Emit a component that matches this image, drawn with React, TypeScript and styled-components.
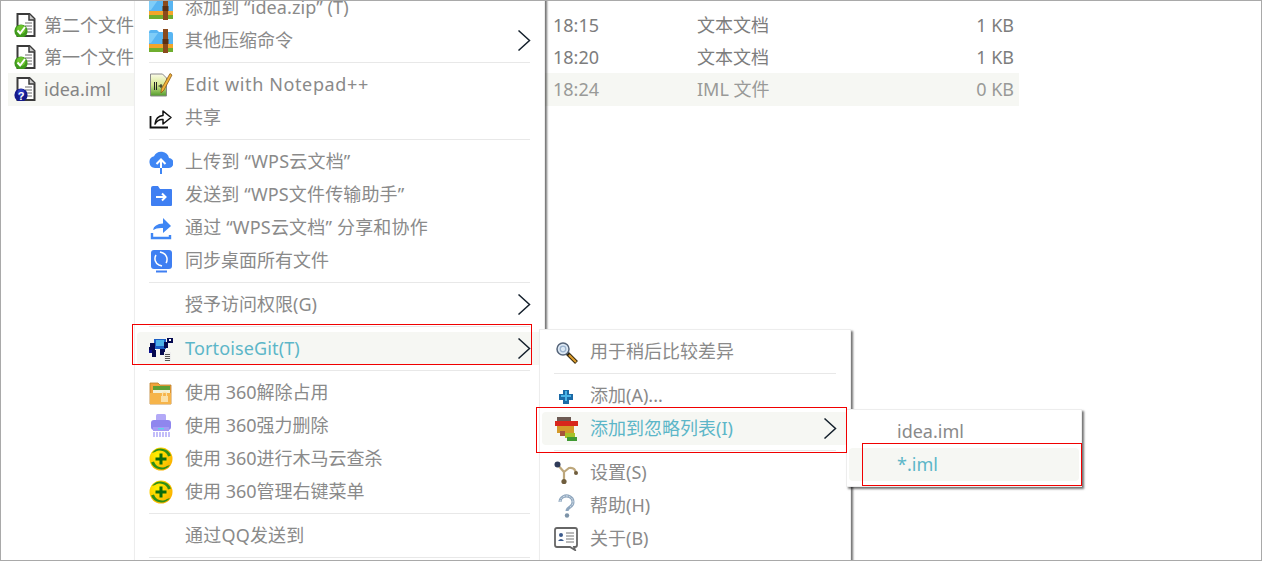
import React from "react";
import styled, { createGlobalStyle } from "styled-components";

const Global = createGlobalStyle`
  html, body { margin: 0; padding: 0; background: #fff; }
  body { font-family: "Noto Sans", "Noto Sans CJK SC", sans-serif; }
`;

const Stage = styled.div`
  position: relative;
  box-sizing: border-box;
  width: 1262px;
  height: 561px;
  border: 1px solid #a9a9a9;
  overflow: hidden;
  background: #fff;
  padding: 8px 0 0 7px;
  font-size: 18px;
`;

const FileList = styled.div`
  width: 1011px;
  display: flex;
  flex-direction: column;
`;

const FileRow = styled.div<{ $selected?: boolean }>`
  display: grid;
  grid-template-columns: 539px 144px 1fr auto;
  align-items: center;
  box-sizing: border-box;
  height: ${(p) => (p.$selected ? 33 : 32)}px;
  padding: 0 5px ${(p) => (p.$selected ? 1 : 0)}px 6px;
  background: ${(p) => (p.$selected ? "#f6f7f3" : "transparent")};
  color: ${(p) => (p.$selected ? "#999a98" : "#7d7d7d")};
  line-height: 32px;
`;

const FileName = styled.div`
  display: flex;
  align-items: center;
  gap: 6px;
  color: #858585;
`;

const Menu = styled.div<{ $left: number; $top: number; $width: number }>`
  position: absolute;
  left: ${(p) => p.$left}px;
  top: ${(p) => p.$top}px;
  width: ${(p) => p.$width}px;
  box-sizing: border-box;
  padding: 5px 2px;
  background: #fff;
  border: 1px solid #ededed;
  box-shadow: 2px 2px 2px rgba(0, 0, 0, 0.55);
  color: #8a8a8a;
`;

const Row = styled.div<{ $active?: boolean }>`
  position: relative;
  display: flex;
  align-items: center;
  height: 33px;
  padding-left: 12px;
  border-radius: 4px;
  background: ${(p) => (p.$active ? "#f6f7f3" : "transparent")};
  color: ${(p) => (p.$active ? "#5cb6c8" : "inherit")};
  white-space: nowrap;
`;

const IconSlot = styled.span`
  flex: 0 0 24px;
  width: 24px;
  height: 24px;
  margin-right: 12px;
  display: flex;
`;

const Label = styled.span<{ $tracking?: number; $latin?: boolean }>`
  padding-bottom: ${(p) => (p.$latin ? 1 : 3)}px;
  letter-spacing: ${(p) => p.$tracking ?? 0}px;
`;

const Chevron = styled.svg`
  position: absolute;
  right: 11px;
  top: 5px;
`;

const Separator = styled.div`
  height: 1px;
  margin: 5px 12px;
  background: #e8e8e8;
`;

const RedFrame = styled.div<{ $x: number; $y: number; $w: number; $h: number }>`
  position: absolute;
  left: ${(p) => p.$x}px;
  top: ${(p) => p.$y}px;
  width: ${(p) => p.$w}px;
  height: ${(p) => p.$h}px;
  box-sizing: border-box;
  border: 1px solid #f00000;
  pointer-events: none;
`;

const Svg = styled.svg`
  display: block;
  width: 24px;
  height: 24px;
`;

const FileBadge = ({ kind }: { kind: "ok" | "unknown" }) => (
  <Svg viewBox="0 0 24 24">
    <path d="M3.5 1h12l5 5v17h-17z" fill="#fff" stroke="#3b3b3b" strokeWidth="2" />
    <path d="M15 1v6h6" fill="#c9c9c9" stroke="#3b3b3b" strokeWidth="1.5" />
    <path d="M11 10h7M11 13h7M11 16h7M11 19h7" stroke="#6a6a6a" strokeWidth="1" />
    {kind === "ok" ? (
      <>
        <circle cx="7" cy="18" r="6.6" fill="#3f9a1c" />
        <circle cx="7" cy="16.5" r="4.5" fill="#6cc22f" />
        <path d="M3.5 17.5l2.6 3L11 14" fill="none" stroke="#fff" strokeWidth="2" />
      </>
    ) : (
      <>
        <circle cx="7" cy="18" r="6.6" fill="#141a8c" />
        <circle cx="7" cy="15.5" r="3.5" fill="#2b3ac0" />
        <text x="7" y="22.5" textAnchor="middle" fontSize="11" fontWeight="700" fill="#fff" fontFamily="Liberation Sans, sans-serif">?</text>
      </>
    )}
  </Svg>
);

const ZipIcon = () => (
  <Svg viewBox="0 0 24 24">
    <path d="M0 3q0-2 2-2h6l2 2h12q2 0 2 2v11H0z" fill="#58b5f2" />
    <path d="M0 4l9 0-7 10H0z" fill="#7fcdf8" />
    <rect x="0" y="15" width="24" height="4" fill="#f3a52a" />
    <rect x="0" y="19" width="24" height="4" fill="#6fae2f" />
    <rect x="14" y="0" width="5" height="24" fill="#8a4a1c" />
    <rect x="13.5" y="10" width="6" height="5" fill="#5d2f10" />
  </Svg>
);

const NotepadIcon = () => (
  <Svg viewBox="0 0 24 24">
    <defs>
      <linearGradient id="np" x1="0" y1="0" x2="0" y2="1">
        <stop offset="0" stopColor="#fbfbe8" />
        <stop offset="0.5" stopColor="#d6e88e" />
        <stop offset="1" stopColor="#4f9a2b" />
      </linearGradient>
    </defs>
    <path d="M1.500 1h12l4 4v18h-16z" fill="url(#np)" stroke="#8a8a8a" />
    <path d="M5.500 9v8M7.500 9v8M9.500 13h4M12 11v4" stroke="#222" strokeWidth="1" />
    <path d="M21 .5l2 1.500-8 15-3 3 .3-4z" fill="#f2b33c" stroke="#8c5a17" strokeWidth=".8" />
  </Svg>
);

const ShareIcon = () => (
  <Svg viewBox="0 0 24 24">
    <path d="M1.500 10v11.500h17.500" fill="none" stroke="#111" strokeWidth="1.800" />
    <path d="M6 18q1-8 8-8.500V5l8 6.500-8 6.500v-4.500q-5-.5-8 4.500z" fill="#fff" stroke="#111" strokeWidth="1.500" strokeLinejoin="round" />
  </Svg>
);

const CloudIcon = () => (
  <Svg viewBox="0 0 24 24">
    <path d="M6 18a6 6 0 0 1-1-11.800A8 8 0 0 1 20 8a5 5 0 0 1-1 10z" fill="#3f86f4" />
    <path d="M12 23.500V10M7.500 14l4.500-4.500 4.500 4.500" fill="none" stroke="#fff" strokeWidth="2" />
    <path d="M12 18v6" stroke="#3f86f4" strokeWidth="2" />
  </Svg>
);

const SendIcon = () => (
  <Svg viewBox="0 0 24 24">
    <path d="M2 5q0-2 2-2h5l2 3h11q1 0 1 1v15q0 1-1 1H3q-1 0-1-1z" fill="#3f7ff2" />
    <path d="M7 14h9M13 10.500l3.500 3.500-3.500 3.500" fill="none" stroke="#fff" strokeWidth="2" />
  </Svg>
);

const ShareBlueIcon = () => (
  <Svg viewBox="0 0 24 24">
    <path d="M4 14q1-6 10-6.500V2l8 8-8 7v-5q-6-.5-10 2z" fill="#3f86f4" />
    <path d="M3 17v5h18v-3" fill="none" stroke="#3f86f4" strokeWidth="2.400" />
  </Svg>
);

const SyncIcon = () => (
  <Svg viewBox="0 0 24 24">
    <rect x="2" y="1" width="21" height="19" rx="3" fill="#3f7ff2" />
    <path d="M7 6a7 7 0 0 0 3 10M17 14a7 7 0 0 0-3-10M10 16l3 1M14 4l-3-1" fill="none" stroke="#fff" strokeWidth="1.500" />
    <path d="M7 22.500h11" stroke="#3f7ff2" strokeWidth="2" />
  </Svg>
);

const TortoiseIcon = () => (
  <Svg viewBox="0 0 24 24" shapeRendering="crispEdges">
    <rect x="5" y="2" width="12" height="10" fill="#1c5fc4" />
    <rect x="7" y="3" width="8" height="6" fill="#4db2e8" />
    <rect x="1" y="6" width="5" height="7" fill="#050a50" />
    <rect x="15" y="5" width="4" height="6" fill="#050a50" />
    <rect x="0" y="10" width="4" height="3" fill="#050a50" />
    <rect x="18" y="1" width="6" height="5" fill="#050a50" />
    <rect x="20" y="2" width="2" height="2" fill="#fff" />
    <rect x="0" y="13" width="7" height="3" fill="#0a1090" />
    <rect x="3" y="13" width="4" height="7" fill="#050a50" />
    <rect x="11" y="12" width="5" height="6" fill="#050a50" />
    <rect x="15" y="15" width="7" height="9" fill="#eee" />
    <path d="M16 17h5M16 19h5M16 21h5M16 23h5" stroke="#555" />
  </Svg>
);

const Folder360Icon = () => (
  <Svg viewBox="0 0 24 24">
    <path d="M1 2h8l2 2h11v19H1z" fill="#f1a33b" stroke="#b97c26" strokeWidth=".8" />
    <rect x="4" y="5" width="17" height="4" fill="#5f9f35" />
    <rect x="4" y="9" width="17" height="3" fill="#f3f0d8" />
    <path d="M1 12h21v11H1z" fill="#f6b44a" />
    <rect x="12" y="15" width="7" height="6" fill="#fbe0a8" />
    <path d="M13.500 15v-2a2 2 0 0 1 4 0v2" fill="none" stroke="#fbe0a8" strokeWidth="1.200" />
  </Svg>
);

const ShredIcon = () => (
  <Svg viewBox="0 0 24 24">
    <rect x="7" y="0" width="10" height="8" rx="1.500" fill="#b3a9f7" />
    <rect x="2" y="6" width="20" height="10" rx="3" fill="#8f86ee" />
    <rect x="4" y="13" width="16" height="4" fill="#a59cf4" />
    <rect x="9" y="14" width="6" height="1.500" fill="#5ed2ea" />
    <path d="M5 18v5M8 18v5M11 18v5M14 18v5M17 18v5M20 18v5" stroke="#b9b2f8" strokeWidth="1.700" />
  </Svg>
);

const Plus360Icon = () => (
  <Svg viewBox="0 0 24 24">
    <defs>
      <radialGradient id="yl" cx="0.35" cy="0.35" r="0.8">
        <stop offset="0" stopColor="#fff200" />
        <stop offset="1" stopColor="#fba900" />
      </radialGradient>
    </defs>
    <circle cx="12" cy="12" r="11.500" fill="url(#yl)" />
    <path d="M3 6A11 11 0 0 1 22 8.500L19 9.500A8.500 8.500 0 0 0 6 5z" fill="#2f8f16" />
    <path d="M21 18A11 11 0 0 1 2 15.500L5 14.500A8.500 8.500 0 0 0 18 19z" fill="#2f8f16" />
    <path d="M12 6.500v11M6.500 12h11" stroke="#0d6b0a" strokeWidth="3" />
  </Svg>
);

const MagnifierIcon = () => (
  <Svg viewBox="0 0 24 24">
    <path d="M13 13l9.500 9.500" stroke="#3a2c10" strokeWidth="4" />
    <path d="M15 15l7 7" stroke="#e0a030" strokeWidth="2" />
    <circle cx="9" cy="9" r="6" fill="#dde9f5" stroke="#56657a" strokeWidth="1.500" />
    <circle cx="9" cy="9" r="2.800" fill="none" stroke="#9cb4cf" strokeWidth="1.300" />
  </Svg>
);

const PlusIcon = () => (
  <Svg viewBox="0 0 24 24" shapeRendering="crispEdges">
    <path d="M9 6h6v4h4v6h-4v4H9v-4H5v-6h4z" fill="#1b6aa6" />
    <path d="M11 7h2v4h4v2h-4v4h-2v-4H7v-2h4z" fill="#49b4e8" />
  </Svg>
);

const IgnoreIcon = () => (
  <Svg viewBox="0 0 24 24">
    <defs>
      <filter id="soft" x="-10%" y="-10%" width="120%" height="120%">
        <feGaussianBlur stdDeviation="0.7" />
      </filter>
    </defs>
    <g filter="url(#soft)">
      <rect x="3" y="0" width="14" height="4" fill="#6d5a52" />
      <rect x="1" y="4" width="23" height="5" fill="#d8261c" />
      <rect x="3" y="9" width="17" height="7" fill="#d49a2a" />
      <rect x="6" y="14" width="5" height="5" fill="#a8553a" />
      <rect x="11" y="16" width="10" height="5" fill="#a6c32a" />
      <rect x="13" y="20" width="10" height="4" fill="#3f9a30" />
    </g>
  </Svg>
);

const SettingsIcon = () => (
  <Svg viewBox="0 0 24 24">
    <path d="M3 3l7 8v9M10 11l5-4q6-1 7 5" fill="none" stroke="#bda77c" strokeWidth="2.200" />
    <circle cx="3.500" cy="3.500" r="3" fill="#2e3a58" />
    <circle cx="10" cy="20.500" r="2.600" fill="#6f5d3d" />
    <circle cx="22" cy="12" r="2" fill="#6f5d3d" />
  </Svg>
);

const HelpIcon = () => (
  <Svg viewBox="0 0 24 24">
    <path d="M6 8a6.500 6 0 1 1 10 5q-3 2-3 4" fill="none" stroke="#8ea6be" strokeWidth="3" />
    <path d="M6 8a6.500 6 0 1 1 10 5" fill="none" stroke="#e4ebf2" strokeWidth="1" strokeDasharray="2 1" />
    <circle cx="13" cy="21.500" r="2.200" fill="#7d93a8" />
  </Svg>
);

const AboutIcon = () => (
  <Svg viewBox="0 0 24 24">
    <path d="M3 1h18q2 0 2 2v15q0 2-2 2h-1l1 3-5-3H3q-2 0-2-2V3q0-2 2-2z" fill="#fff" stroke="#666" strokeWidth="1.800" />
    <circle cx="7" cy="8" r="2" fill="#3c5a8c" />
    <path d="M4 14q3-4 6 0z" fill="#3c5a8c" />
    <path d="M12 6h8M12 9h8M12 12h8M12 15h8" stroke="#777" strokeWidth="1" />
  </Svg>
);

type Entry =
  | { sep: true }
  | { label: string; icon?: React.ReactNode; more?: boolean; active?: boolean; tracking?: number; latin?: boolean };

const mainMenu: Entry[] = [
  { label: "添加到 “idea.zip” (T)", icon: <ZipIcon />, tracking: 0.1 },
  { label: "其他压缩命令", icon: <ZipIcon />, more: true },
  { sep: true },
  { label: "Edit with Notepad++", icon: <NotepadIcon />, tracking: 0.62, latin: true },
  { label: "共享", icon: <ShareIcon /> },
  { sep: true },
  { label: "上传到 “WPS云文档”", icon: <CloudIcon />, tracking: 0.2 },
  { label: "发送到 “WPS文件传输助手”", icon: <SendIcon />, tracking: 0.15 },
  { label: "通过 “WPS云文档” 分享和协作", icon: <ShareBlueIcon />, tracking: 0.18 },
  { label: "同步桌面所有文件", icon: <SyncIcon /> },
  { sep: true },
  { label: "授予访问权限(G)", more: true },
  { sep: true },
  { label: "TortoiseGit(T)", icon: <TortoiseIcon />, more: true, active: true, tracking: 0.14, latin: true },
  { sep: true },
  { label: "使用 360解除占用", icon: <Folder360Icon /> },
  { label: "使用 360强力删除", icon: <ShredIcon /> },
  { label: "使用 360进行木马云查杀", icon: <Plus360Icon /> },
  { label: "使用 360管理右键菜单", icon: <Plus360Icon /> },
  { sep: true },
  { label: "通过QQ发送到", tracking: 0.2 },
  { sep: true },
];

const gitMenu: Entry[] = [
  { label: "用于稍后比较差异", icon: <MagnifierIcon /> },
  { sep: true },
  { label: "添加(A)...", icon: <PlusIcon /> },
  { label: "添加到忽略列表(I)", icon: <IgnoreIcon />, more: true, active: true },
  { sep: true },
  { label: "设置(S)", icon: <SettingsIcon /> },
  { label: "帮助(H)", icon: <HelpIcon /> },
  { label: "关于(B)", icon: <AboutIcon /> },
];

const ignoreMenu: Entry[] = [
  { label: "idea.iml", latin: true },
  { label: "*.iml", active: true, latin: true },
];

const Entries = ({ items }: { items: Entry[] }) => (
  <>
    {items.map((e, i) =>
      "sep" in e ? (
        <Separator key={i} />
      ) : (
        <Row key={i} $active={e.active}>
          <IconSlot>{e.icon}</IconSlot>
          <Label $tracking={e.tracking} $latin={e.latin}>{e.label}</Label>
          {e.more ? (
            <Chevron width="14" height="23" viewBox="0 0 14 23">
              <path d="M1.500 1.500L12.500 11.500 1.500 21.500" fill="none" stroke="#14202c" strokeWidth="1.500" />
            </Chevron>
          ) : null}
        </Row>
      )
    )}
  </>
);

const files = [
  { name: "第二个文件", kind: "ok" as const, time: "18:15", type: "文本文档", size: "1 KB" },
  { name: "第一个文件", kind: "ok" as const, time: "18:20", type: "文本文档", size: "1 KB" },
  { name: "idea.iml", kind: "unknown" as const, time: "18:24", type: "IML 文件", size: "0 KB", selected: true },
];

export default function App() {
  return (
    <>
      <Global />
      <Stage>
        <FileList>
          {files.map((f) => (
            <FileRow key={f.name} $selected={f.selected}>
              <FileName>
                <FileBadge kind={f.kind} />
                {f.name}
              </FileName>
              <div>{f.time}</div>
              <div>{f.type}</div>
              <div>{f.size}</div>
            </FileRow>
          ))}
        </FileList>
        <Menu $left={133} $top={-16} $width={411}>
          <Entries items={mainMenu} />
        </Menu>
        <Menu $left={538} $top={328} $width={312}>
          <Entries items={gitMenu} />
        </Menu>
        <Menu $left={845} $top={408} $width={236}>
          <Entries items={ignoreMenu} />
        </Menu>
        <RedFrame $x={131} $y={323} $w={400} $h={41} />
        <RedFrame $x={535} $y={406} $w={311} $h={46} />
        <RedFrame $x={861} $y={442} $w={220} $h={43} />
      </Stage>
    </>
  );
}
